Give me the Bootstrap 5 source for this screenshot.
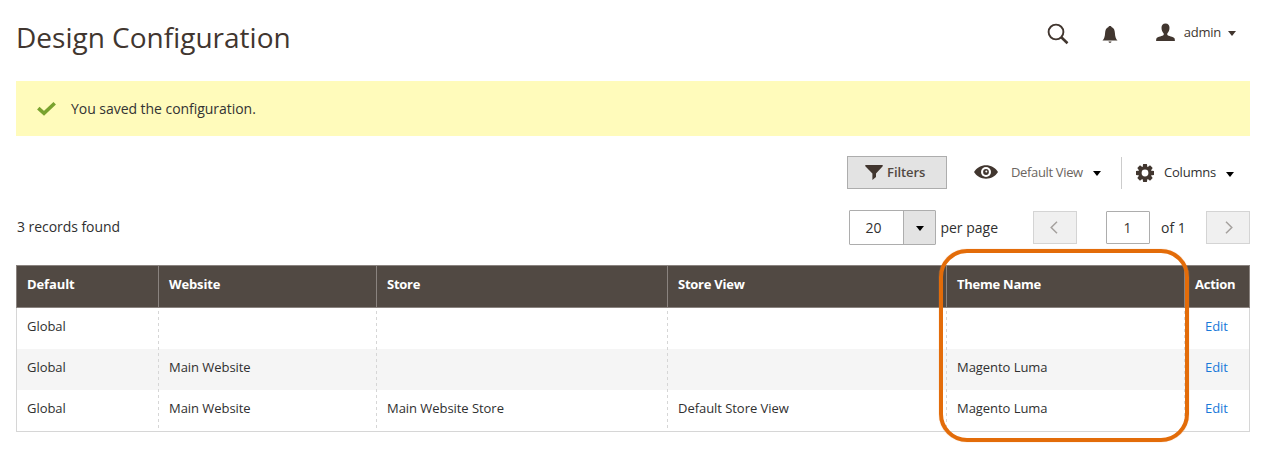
<!DOCTYPE html>
<html lang="en">
<head>
<meta charset="utf-8">
<meta name="viewport" content="width=device-width, initial-scale=1">
<title>Design Configuration</title>
<link href="https://cdn.jsdelivr.net/npm/bootstrap@5.3.0/dist/css/bootstrap.min.css" rel="stylesheet">
<style>
  body { font-family: "Open Sans", sans-serif; font-size: 14px; line-height: 19px; color: #303030; background: #fff; }
  .page-wrap { width: 1234px; margin-left: 16px; min-height: 464px; }
  .page-head { height: 81px; }
  .page-title { font-size: 28px; line-height: 34px; font-weight: 400; color: #41362f; padding-top: 20px; }
  .user-tools { padding: 23px 14px 0 0; height: 43px; font-size: 13px; }
  .user-tools, .ink { color: #41362f; }
  .user-name { letter-spacing: -.25px; }
  .message-bar { height: 55px; background: #fffbbb; padding-left: 21px; color: #333; letter-spacing: -.04px; }
  .tool-row { height: 33px; margin-top: 20px; font-size: 13px; }
  .btn-filters { width: 100px; height: 33px; background: #e3e3e3; border: 1px solid #adadad; border-radius: 0; color: #514943; font-size: 13px; font-weight: 600; line-height: 19px; }
  .view-name { color: #6b6560; width: 72px; letter-spacing: -.35px; white-space: nowrap; }
  .col-name { width: 52px; letter-spacing: -.2px; }
  .tool-split { width: 1px; height: 32px; background: #ccc; }
  .caret-down { width: 0; height: 0; border: 4px solid transparent; border-top: 5px solid #000; border-bottom: 0; }
  .pager-row { height: 35px; margin-top: 21px; }
  .per-select { width: 87px; height: 35px; border: 1px solid #adadad; border-radius: 1px; }
  .per-arrow { width: 32px; background: #e3e3e3; border-left: 1px solid #adadad; }
  .page-btn { width: 44px; height: 33px; background: #f0f0f0; border: 1px solid #d4d4d4; }
  .page-input { width: 44px; height: 33px; border: 1px solid #adadad; border-radius: 1px; color: #41362f; }
  .grid-area { margin-top: 20px; }
  .data-grid { width: 1234px; table-layout: fixed; border-collapse: separate; border-spacing: 0; font-size: 13px; line-height: 18px; }
  .data-grid th { height: 43px; padding: 0 0 5px 10px; background: #514943; color: #fff; border: 1px solid #8a837f; border-right: 0; font-weight: 700; vertical-align: middle; letter-spacing: -.25px; }
  .data-grid th:first-child, .data-grid th:nth-child(2) { letter-spacing: -.12px; }
  .data-grid th:last-child { border-right: 1px solid #8a837f; }
  .data-grid td { --dash-start: 0px; height: 41px; padding: 0 0 5px 11px; border: 0; color: #303030; vertical-align: middle; letter-spacing: -.05px;
    background: repeating-linear-gradient(#0000 0 3px, #d6d6d6 3px 6px) 0 var(--dash-start) / 1px 60px repeat-y; }
  .data-grid td:first-child { border-left: 1px solid #d6d6d6; padding-left: 10px; background-image: none; }
  .data-grid td:last-child { border-right: 1px solid #d6d6d6; padding-left: 0; }
  .data-grid tbody tr:nth-child(2) { background: #f5f5f5; }
  .data-grid tbody tr:nth-child(2) td { --dash-start: -5px; }
  .data-grid tbody tr:nth-child(3) td { --dash-start: -4px; height: 42px; border-bottom: 1px solid #d6d6d6; }
  .data-grid .act { text-align: center; }
  .data-grid .act a { color: #1979d9; text-decoration: none; }
  .callout-ring { left: 923px; top: -16px; width: 250px; height: 193px; border: 4px solid #e36c09; border-radius: 28px; pointer-events: none; box-shadow: 0 0 1px #e8985c; }
</style>
</head>
<body>
<div class="page-wrap">
  <header class="page-head d-flex justify-content-between">
    <h1 class="page-title mb-0">Design Configuration</h1>
    <div class="user-tools d-flex align-items-start">
      <svg width="22" height="22" viewBox="0 0 22 22" fill="none" stroke="currentColor"><circle cx="9" cy="9" r="7.4" stroke-width="1.9"/><path d="M14.3 14.3 20.5 20.3" stroke-width="2.6"/></svg>
      <svg style="margin:3px 0 0 33px" width="16" height="18" viewBox="0 0 16 18" fill="currentColor"><path d="M8 0c.9 0 1.300.4 1.500 1C12 1.900 12.700 4 12.900 7c.2 4 .9 5.700 2.600 7.600H.5C2.200 12.700 2.900 11 3.100 7 3.300 4 4 1.900 6.500 1 6.700.4 7.100 0 8 0zM6.500 15.400h3c-.1.900-.700 1.400-1.500 1.400s-1.400-.5-1.500-1.400z"/></svg>
      <svg style="margin:0 0 0 38px" width="19" height="19" viewBox="0 0 19 19" fill="currentColor"><path d="M9.500.5c2.700 0 4 1.600 4 4.300 0 2.400-.9 4.500-2.200 5.600v1.500c.6.900 6.300 1.700 7.200 3.400.3.600.4 1.600.4 2.700H.1c0-1.100.1-2.100.4-2.700.9-1.700 6.600-2.500 7.200-3.400v-1.500C6.400 9.300 5.500 7.200 5.500 4.800c0-2.700 1.300-4.300 4-4.300z"/></svg>
      <span class="user-name" style="margin-left:9px">admin</span>
      <span class="caret-down" style="margin:8px 0 0 7px;border-top-color:#41362f"></span>
    </div>
  </header>

  <div class="message-bar d-flex align-items-center">
    <svg width="19" height="14" viewBox="0 0 19 14" fill="none" stroke="#79a22e" stroke-width="3.600"><path d="M1.300 6.200 7 11.300 17.700 1.300"/></svg>
    <span style="margin-left:15px">You saved the configuration.</span>
  </div>

  <div class="tool-row d-flex align-items-center justify-content-end">
    <button class="btn-filters d-flex align-items-center p-0" type="button">
      <svg class="ink" style="margin-left:17px" width="18" height="15" viewBox="0 0 18 15" fill="currentColor"><path d="M.3 0h17.400v1.200L11 8.600V12l-3.600 3V8.600L.3 1.200z"/></svg>
      <span style="margin-left:4px;letter-spacing:-.05px">Filters</span>
    </button>
    <svg class="ink" style="margin:-2px 0 0 27px" width="24" height="14" viewBox="0 0 24 14"><path fill="currentColor" d="M0 7C2.800 2.600 7 .3 12 .3S21.200 2.600 24 7c-2.800 4.400-7 6.700-12 6.700S2.800 11.400 0 7z"/><circle cx="12" cy="7" r="5" fill="#fff"/><circle cx="12" cy="7" r="2.900" fill="currentColor"/><circle cx="12.300" cy="6.500" r="1" fill="#fff"/></svg>
    <span class="view-name" style="margin-left:13px">Default View</span>
    <span class="caret-down" style="margin:2px 0 0 10px"></span>
    <span class="tool-split" style="margin-left:20px"></span>
    <svg class="ink" style="margin-left:13px" width="20" height="18" viewBox="-10 -9 20 18"><g fill="currentColor"><g id="teeth"><path d="M-1.900-9h3.800l.6 4h-5z"/><path d="M-1.900-9h3.800l.6 4h-5z" transform="rotate(45)"/><path d="M-1.900-9h3.800l.6 4h-5z" transform="rotate(90)"/><path d="M-1.900-9h3.800l.6 4h-5z" transform="rotate(135)"/></g><use href="#teeth" transform="rotate(180)"/></g><circle r="5" fill="none" stroke="currentColor" stroke-width="3.200"/></svg>
    <span class="col-name" style="margin-left:9px">Columns</span>
    <span class="caret-down" style="margin:3px 16px 0 10px"></span>
  </div>

  <div class="pager-row d-flex align-items-center">
    <span class="me-auto" style="margin:-2px 0 0 1px;letter-spacing:-.05px">3 records found</span>
    <div class="per-select d-flex align-items-stretch">
      <span class="flex-grow-1 d-flex align-items-center" style="padding-left:15px">20</span>
      <span class="per-arrow d-flex align-items-center justify-content-center"><i class="caret-down" style="margin-top:2px"></i></span>
    </div>
    <span style="margin-left:4px">per page</span>
    <span class="page-btn d-flex align-items-center justify-content-center" style="margin-left:35px"><svg style="margin-right:2px" width="8" height="13" viewBox="0 0 8 13" fill="none" stroke="#a5a19e" stroke-width="1.500"><path d="M7 .7 1.200 6.500 7 12.300"/></svg></span>
    <span class="page-input d-flex align-items-center justify-content-center" style="margin-left:29px;padding-right:1px">1</span>
    <span style="margin-left:11px;width:25px;white-space:nowrap">of 1</span>
    <span class="page-btn d-flex align-items-center justify-content-center" style="margin-left:20px"><svg style="margin-left:2px" width="8" height="13" viewBox="0 0 8 13" fill="none" stroke="#a5a19e" stroke-width="1.500"><path d="M1 .7 6.800 6.500 1 12.300"/></svg></span>
  </div>

  <div class="grid-area position-relative">
    <table class="data-grid">
      <colgroup><col style="width:142px"><col style="width:218px"><col style="width:291px"><col style="width:279px"><col style="width:238px"><col style="width:66px"></colgroup>
      <thead><tr><th>Default</th><th>Website</th><th>Store</th><th>Store View</th><th>Theme Name</th><th>Action</th></tr></thead>
      <tbody>
        <tr><td>Global</td><td></td><td></td><td></td><td></td><td class="act"><a href="#">Edit</a></td></tr>
        <tr><td>Global</td><td>Main Website</td><td></td><td></td><td>Magento Luma</td><td class="act"><a href="#">Edit</a></td></tr>
        <tr><td>Global</td><td>Main Website</td><td>Main Website Store</td><td>Default Store View</td><td>Magento Luma</td><td class="act"><a href="#">Edit</a></td></tr>
      </tbody>
    </table>
    <div class="callout-ring position-absolute"></div>
  </div>
</div>
<script src="https://cdn.jsdelivr.net/npm/bootstrap@5.3.0/dist/js/bootstrap.bundle.min.js"></script>
</body>
</html>
